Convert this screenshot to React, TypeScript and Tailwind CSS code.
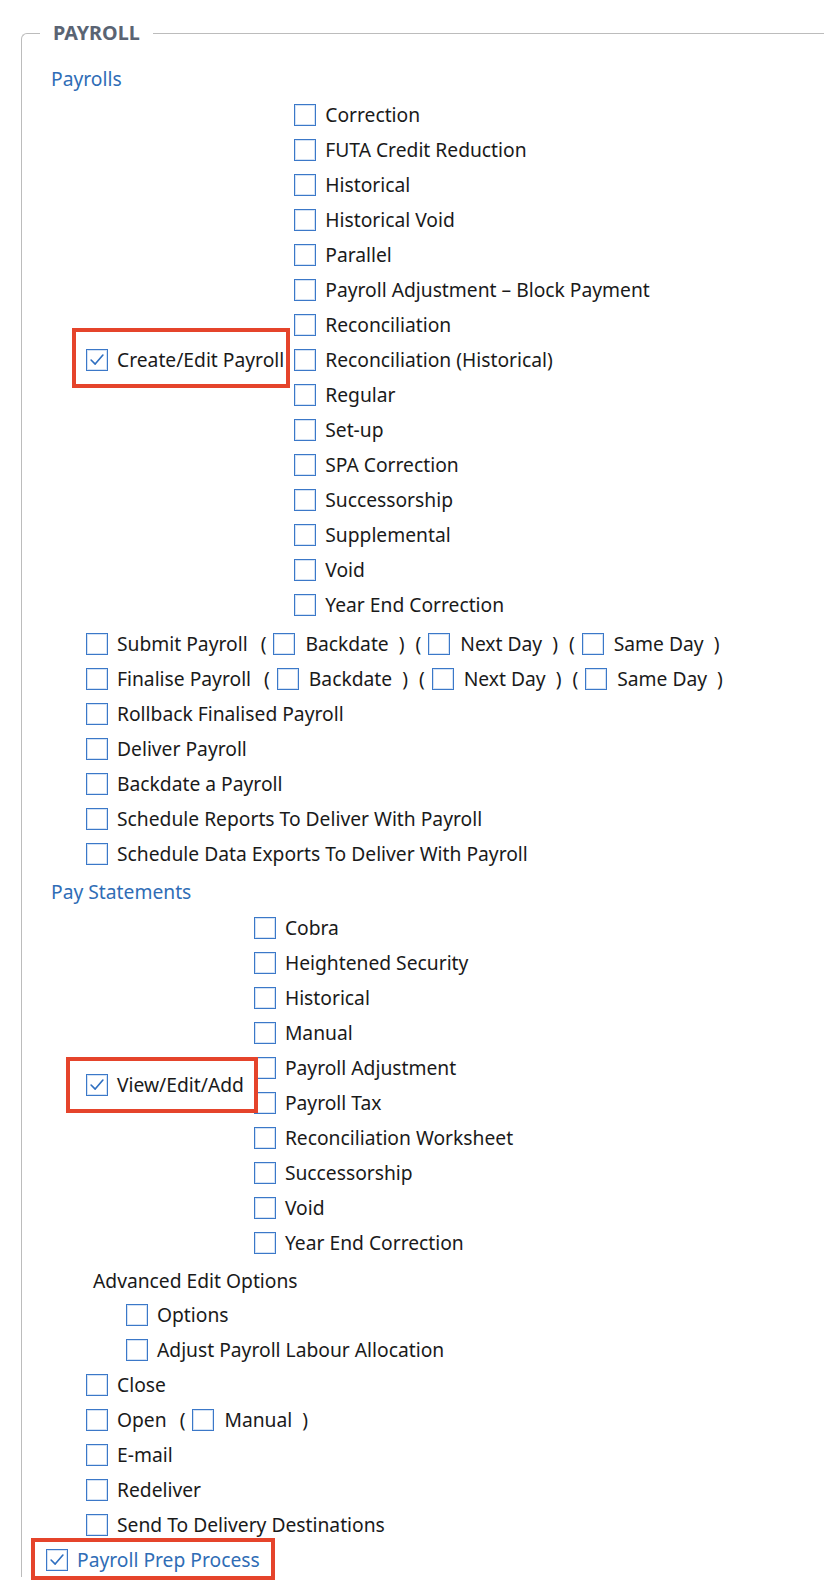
import React from "react";

const FONT = { fontFamily: '"Noto Sans", "Open Sans", "Liberation Sans", sans-serif' };

function Box({ checked = false }: { checked?: boolean }) {
  return (
    <span className="flex-none w-[22px] h-[22px] border border-[#3b78c8] bg-white shadow-[inset_0_0_0_1px_#d3e2f5] flex items-center justify-center">
      {checked && (
        <svg width="22" height="22" viewBox="0 0 22 22" className="block">
          <path d="M4.5 11 L9 15.5 L17.5 5.5" fill="none" stroke="#2f6fc0" strokeWidth="1.8" strokeLinecap="round" strokeLinejoin="round" />
        </svg>
      )}
    </span>
  );
}

function Item({ label, checked = false }: { label: string; checked?: boolean }) {
  return (
    <div className="flex h-[35px] items-center">
      <Box checked={checked} />
      <span className="ml-[9px] whitespace-nowrap">{label}</span>
    </div>
  );
}

function Opt({ label, first = false }: { label: string; first?: boolean }) {
  return (
    <>
      <span className={first ? "ml-[13px]" : "ml-[11px]"}>(</span>
      <span className="ml-[7px] flex items-center">
        <Box />
      </span>
      <span className="ml-[10px] whitespace-nowrap">{label}</span>
      <span className="ml-[10px]">)</span>
    </>
  );
}

function OptRow({ label, opts }: { label: string; opts: string[] }) {
  return (
    <div className="flex h-[35px] items-center">
      <Box />
      <span className="ml-[9px] whitespace-nowrap">{label}</span>
      {opts.map((o, i) => (
        <Opt key={o} label={o} first={i === 0} />
      ))}
    </div>
  );
}

const payrollTypes = [
  "Correction",
  "FUTA Credit Reduction",
  "Historical",
  "Historical Void",
  "Parallel",
  "Payroll Adjustment – Block Payment",
  "Reconciliation",
  "Reconciliation (Historical)",
  "Regular",
  "Set-up",
  "SPA Correction",
  "Successorship",
  "Supplemental",
  "Void",
  "Year End Correction",
];

const statementTypes = [
  "Cobra",
  "Heightened Security",
  "Historical",
  "Manual",
  "Payroll Adjustment",
  "Payroll Tax",
  "Reconciliation Worksheet",
  "Successorship",
  "Void",
  "Year End Correction",
];

export default function App() {
  return (
    <div className="min-h-[1586px] bg-white text-[19.25px] text-[#1a1a1a] pt-[20px] pl-[21px]" style={FONT}>
      <fieldset className="border-t border-l border-[#bcbcbc] rounded-tl-[6px] p-0 m-0">
        <legend className="ml-[18px] pl-[13px] pr-[13px] text-[19.75px] font-bold text-[#5a6473] leading-[26px]">PAYROLL</legend>
        <div className="mt-[15px] pl-[24px] leading-[26px]">
          <div className="flex h-[35px] items-center pl-[5px] text-[#2f6db6]">Payrolls</div>

          <div className="flex items-center pt-[1px] pb-[4px] pl-[40px]">
            <div className="relative flex h-[35px] items-center">
              <Box checked />
              <span className="ml-[9px] whitespace-nowrap">Create/Edit Payroll</span>
              <div className="absolute left-[-14px] top-[-14px] w-[218px] h-[60px] border-[4px] border-[#e5442b] pointer-events-none" />
            </div>
            <div className="ml-[10px] flex flex-col">
              {payrollTypes.map((t) => (
                <Item key={t} label={t} />
              ))}
            </div>
          </div>

          <div className="pl-[40px]">
            <OptRow label="Submit Payroll" opts={["Backdate", "Next Day", "Same Day"]} />
            <OptRow label="Finalise Payroll" opts={["Backdate", "Next Day", "Same Day"]} />
            <Item label="Rollback Finalised Payroll" />
            <Item label="Deliver Payroll" />
            <Item label="Backdate a Payroll" />
            <Item label="Schedule Reports To Deliver With Payroll" />
            <Item label="Schedule Data Exports To Deliver With Payroll" />
          </div>

          <div className="mt-[3px] flex h-[35px] items-center pl-[5px] text-[#2f6db6]">Pay Statements</div>

          <div className="flex items-center pt-[1px] pb-[4px] pl-[40px]">
            <div className="relative flex h-[35px] items-center">
              <Box checked />
              <span className="ml-[9px] whitespace-nowrap">View/Edit/Add</span>
              <div className="absolute left-[-20px] top-[-11px] w-[192px] h-[56px] border-[4px] border-[#e5442b] pointer-events-none" />
            </div>
            <div className="ml-[10px] flex flex-col">
              {statementTypes.map((t) => (
                <Item key={t} label={t} />
              ))}
            </div>
          </div>

          <div className="flex h-[33px] items-center pl-[47px]">Advanced Edit Options</div>
          <div className="pl-[80px]">
            <Item label="Options" />
            <Item label="Adjust Payroll Labour Allocation" />
          </div>

          <div className="pl-[40px]">
            <Item label="Close" />
            <OptRow label="Open" opts={["Manual"]} />
            <Item label="E-mail" />
            <Item label="Redeliver" />
            <Item label="Send To Delivery Destinations" />
          </div>

          <div className="relative flex h-[35px] items-center text-[#2f6db6]">
            <Box checked />
            <span className="ml-[9px] whitespace-nowrap">Payroll Prep Process</span>
            <div className="absolute left-[-15px] top-[-4px] w-[244px] h-[42px] border-[4px] border-[#e5442b] pointer-events-none" />
          </div>
        </div>
      </fieldset>
    </div>
  );
}
